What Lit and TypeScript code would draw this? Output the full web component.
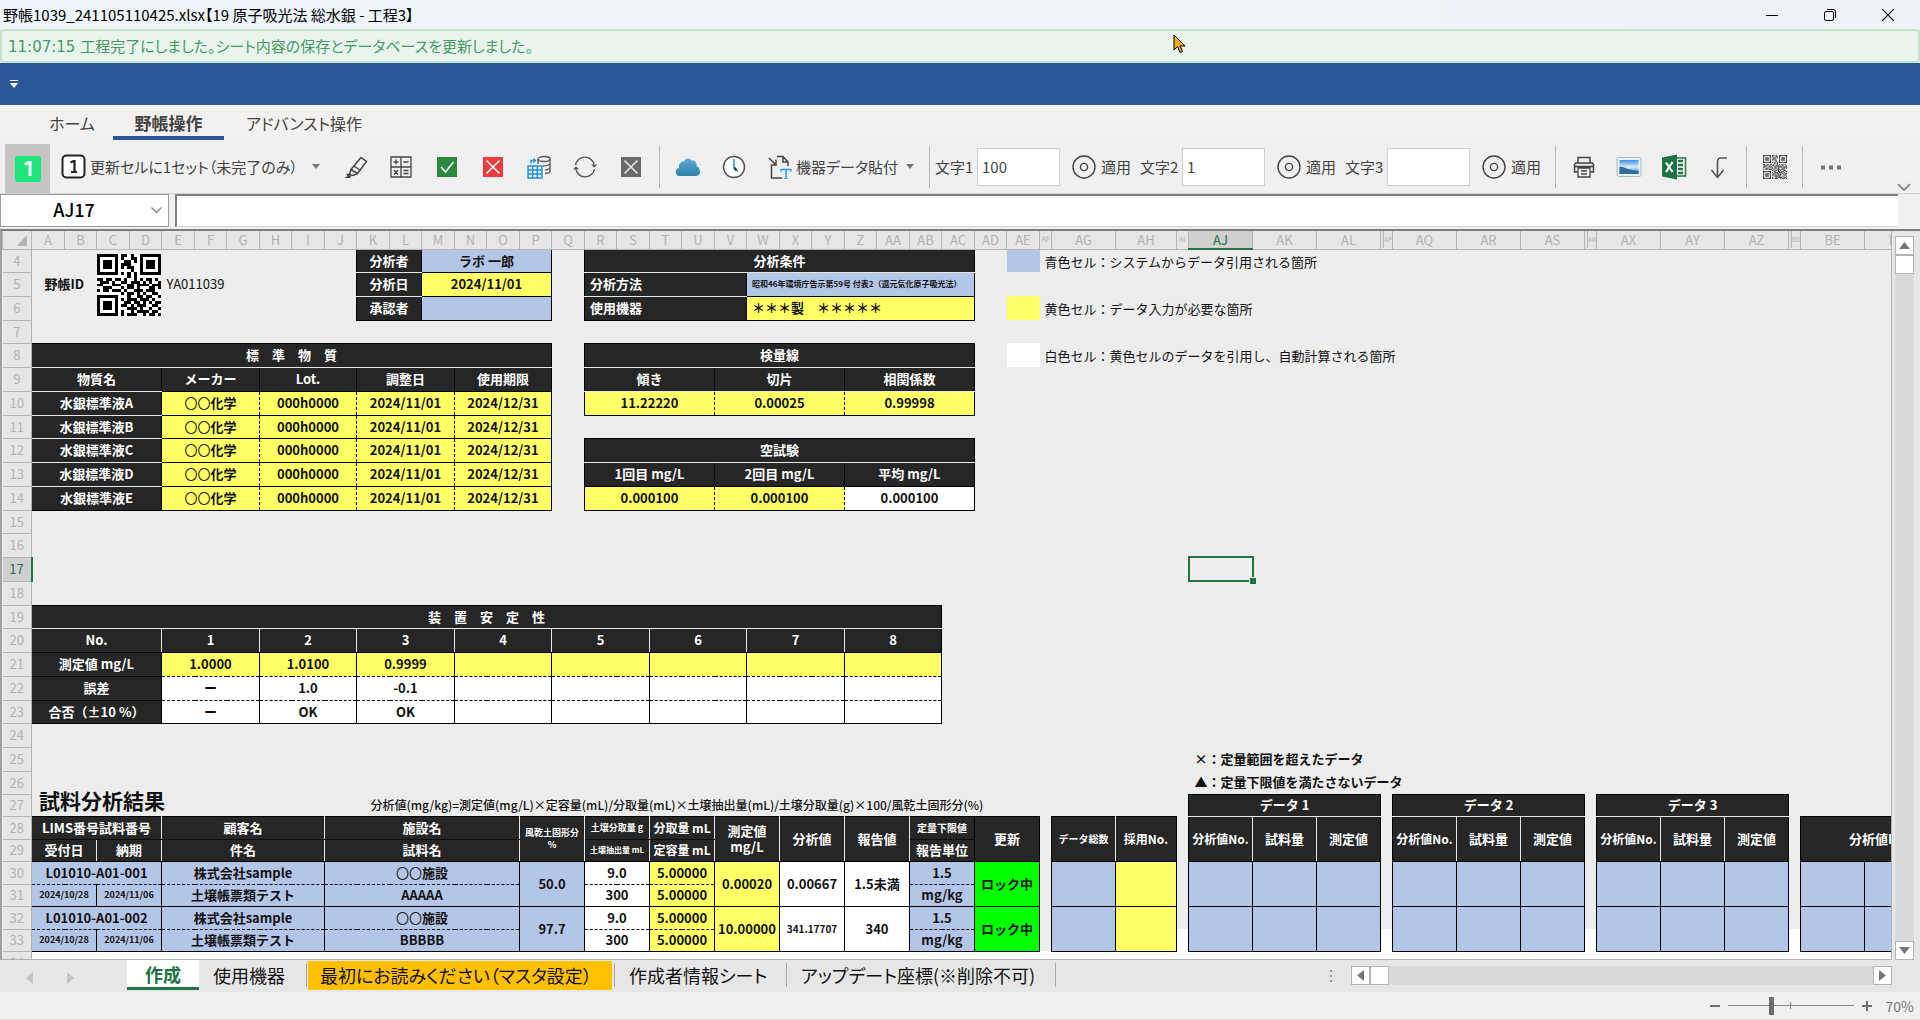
import { LitElement, html, svg, css, nothing, TemplateResult } from "lit";
import { customElement } from "lit/decorators.js";

/* ---------- sheet model ---------- */

interface Column {
  name: string;
  width: number;
  folded?: boolean;
}

interface Cell {
  row: number;
  col: number;
  rows: number;
  cols: number;
  cls: string;
  content: unknown;
}

const LETTERS = "ABCDEFGHIJKLMNOPQRSTUVWXYZ".split("");

const COLUMNS: Column[] = [
  ...[...LETTERS, "AA", "AB", "AC", "AD"].map((name, i) => ({ name, width: i % 2 ? 32 : 33 })),
  { name: "AE", width: 33 },
  { name: "AF", width: 12 },
  { name: "AG", width: 64 },
  { name: "AH", width: 61 },
  { name: "AI", width: 12 },
  { name: "AJ", width: 64 },
  { name: "AK", width: 64 },
  { name: "AL", width: 64 },
  { name: "AP", width: 12, folded: true },
  { name: "AQ", width: 64 },
  { name: "AR", width: 64 },
  { name: "AS", width: 64 },
  { name: "AW", width: 12, folded: true },
  { name: "AX", width: 64 },
  { name: "AY", width: 64 },
  { name: "AZ", width: 64 },
  { name: "BD", width: 12, folded: true },
  { name: "BE", width: 64 },
  { name: "BF", width: 64 },
  { name: "BG", width: 64 },
];

const FIRST_ROW = 4;
const ROW_HEIGHTS = [
  23, 24, 24, 23, 24, 24, 24, 23, 24, 24, 24, 23, 24, 24, 24, 23, 24, 24, 24, 23, 24, 24, 23,
  22, 23, 22, 23, 22, 23, 22, 23,
];
const HEAD_WIDTH = 29;
const TABLE_WIDTH = COLUMNS.reduce((sum, c) => sum + c.width, HEAD_WIDTH);

const colIndex = (name: string) => COLUMNS.findIndex((c) => c.name === name);

function at(range: string, cls = "", content: unknown = ""): Cell {
  const [from, to = from] = range.split(":");
  const [, c1, r1] = /^([A-Z]+)(\d+)$/.exec(from)!;
  const [, c2, r2] = /^([A-Z]+)(\d+)$/.exec(to)!;
  const col = colIndex(c1);
  return {
    row: +r1,
    col,
    rows: +r2 - +r1 + 1,
    cols: colIndex(c2) - col + 1,
    cls,
    content,
  };
}

const QR = [
  "111111101101001111111",
  "100000101001101000001",
  "101110100110101011101",
  "101110101110001011101",
  "101110101011001011101",
  "100000100001001000001",
  "111111101010101111111",
  "000000000010100000000",
  "110110110100101011010",
  "011101001101110101001",
  "110001110011011110111",
  "001110001011010001101",
  "101101110100111011100",
  "000000001011010100110",
  "111111100010011011001",
  "100000101011101110100",
  "101110100110110101011",
  "101110101101011100110",
  "101110100011101001001",
  "100000101001011110110",
  "111111101011100101101",
];

const qrCode = html`<svg class="qr" viewBox="0 0 21 21" preserveAspectRatio="none" role="img" aria-label="YA011039" shape-rendering="crispEdges">
  <rect width="21" height="21" fill="#fff"></rect>
  ${QR.map((line, y) =>
    [...line].map((bit, x) => (bit === "1" ? svg`<rect x=${x} y=${y} width="1" height="1"></rect>` : nothing)),
  )}
</svg>`;

const circles = (rest: string) => html`<span class="thin">〇〇</span>${rest}`;

function buildCells(): Cell[] {
  const cells: Cell[] = [
    at("C4:D6", "pic", qrCode),
    at("A5:B5", "bold", "野帳ID"),
    at("E5:H5", "left", "YA011039"),
    at("K4:L4", "k l rd bw", "分析者"),
    at("M4:P4", "b0 r b", "ラボ 一郎"),
    at("K5:L5", "k l rd bw", "分析日"),
    at("M5:P5", "y r b", "2024/11/01"),
    at("K6:L6", "k l rd b", "承認者"),
    at("M6:P6", "b0 r b"),

    at("R4:AC4", "k l r bw", "分析条件"),
    at("R5:V5", "k l rd bw left", "分析方法"),
    at("W5:AC5", "b0 r b left tiny", "昭和46年環境庁告示第59号 付表2（還元気化原子吸光法）"),
    at("R6:V6", "k l rd b left", "使用機器"),
    at("W6:AC6", "y r b left", "＊＊＊製　＊＊＊＊＊"),

    at("AE4", "b0"),
    at("AF4:AR4", "left note", "青色セル：システムからデータ引用される箇所"),
    at("AE6", "y"),
    at("AF6:AR6", "left note", "黄色セル：データ入力が必要な箇所"),
    at("AE8", "w"),
    at("AF8:AR8", "left note", "白色セル：黄色セルのデータを引用し、自動計算される箇所"),

    at("A8:P8", "k t l r bw", "標　準　物　質"),
    at("A9:D9", "k l rd bw", "物質名"),
    at("E9:G9", "k rd b", "メーカー"),
    at("H9:J9", "k rd b", "Lot."),
    at("K9:M9", "k rd b", "調整日"),
    at("N9:P9", "k r b", "使用期限"),

    at("R8:AC8", "k t l r bw", "検量線"),
    at("R9:U9", "k l rd bw", "傾き"),
    at("V9:Y9", "k rd bw", "切片"),
    at("Z9:AC9", "k r bw", "相関係数"),
    at("R10:U10", "y l rd b", "11.22220"),
    at("V10:Y10", "y rd b", "0.00025"),
    at("Z10:AC10", "y r b", "0.99998"),

    at("R12:AC12", "k t l r bw", "空試験"),
    at("R13:U13", "k l rd b", "1回目 mg/L"),
    at("V13:Y13", "k rd b", "2回目 mg/L"),
    at("Z13:AC13", "k r b", "平均 mg/L"),
    at("R14:U14", "y l rd b", "0.000100"),
    at("V14:Y14", "y rd b", "0.000100"),
    at("Z14:AC14", "w r b", "0.000100"),

    at("AJ17", "sel"),

    at("A19:AB19", "k t l r bw", "装　置　安　定　性"),
    at("A20:D20", "k l rw bd", "No."),
    at("A21:D21", "k l r bd", "測定値 mg/L"),
    at("A22:D22", "k l r bd", "誤差"),
    at("A23:D23", "k l r b", "合否（±10 %）"),

    at("AJ25:AR25", "left bold inset", "×：定量範囲を超えたデータ"),
    at("AJ26:AR26", "left bold inset", "▲：定量下限値を満たさないデータ"),
    at("A26:G27", "left heading", "試料分析結果"),
    at("K27:AE27", "left formula", "分析値(mg/kg)=測定値(mg/L)×定容量(mL)/分取量(mL)×土壌抽出量(mL)/土壌分取量(g)×100/風乾土固形分(%)"),

    at("A28:D28", "k t l rw bd", "LIMS番号試料番号"),
    at("A29:B29", "k l rw b", "受付日"),
    at("C29:D29", "k rw b", "納期"),
    at("E28:I28", "k t rw bd", "顧客名"),
    at("E29:I29", "k rw b", "件名"),
    at("J28:O28", "k t rw bd", "施設名"),
    at("J29:O29", "k rw b", "試料名"),
    at("P28:Q29", "k t rw b small", html`風乾土固形分<br />%`),
    at("R28:S28", "k t rw bd small", "土壌分取量 g"),
    at("R29:S29", "k rw b tiny", "土壌抽出量 mL"),
    at("T28:U28", "k t rw bd mid", "分取量 mL"),
    at("T29:U29", "k rw b mid", "定容量 mL"),
    at("V28:W29", "k t rw b", html`測定値<br />mg/L`),
    at("X28:Y29", "k t rw b", "分析値"),
    at("Z28:AA29", "k t rw b", "報告値"),
    at("AB28:AC28", "k t r bd fit", "定量下限値"),
    at("AB29:AC29", "k r b", "報告単位"),
    at("AD28:AE29", "k t r b", "更新"),
    at("AG28:AG29", "k t l rw b fit", "データ総数"),
    at("AH28:AH29", "k t r b mid", "採用No."),
    at("BE28:BG29", "k t l b peek", "分析値No."),
  ];

  "ABCDE".split("").forEach((id, i) => {
    const r = 10 + i;
    cells.push(
      at(`A${r}:D${r}`, `k l r ${i < 4 ? "bw" : "b"}`, `水銀標準液${id}`),
      at(`E${r}:G${r}`, "y rd b", circles("化学")),
      at(`H${r}:J${r}`, "y rd b", "000h0000"),
      at(`K${r}:M${r}`, "y rd b", "2024/11/01"),
      at(`N${r}:P${r}`, "y r b", "2024/12/31"),
    );
  });

  const stability = [
    ["1.0000", "ー", "ー"],
    ["1.0100", "1.0", "OK"],
    ["0.9999", "-0.1", "OK"],
  ];
  for (let n = 0; n < 8; n++) {
    const from = COLUMNS[4 + n * 3].name;
    const to = COLUMNS[6 + n * 3].name;
    const [value = "", error = "", verdict = ""] = stability[n] ?? [];
    cells.push(
      at(`${from}20:${to}20`, `k b ${n < 7 ? "rw" : "r"}`, String(n + 1)),
      at(`${from}21:${to}21`, "y r bd", value),
      at(`${from}22:${to}22`, "w r bd", error),
      at(`${from}23:${to}23`, "w r b", verdict),
    );
  }

  const samples = [
    { id: "L01010-A01-001", name: "AAAAA", solid: "50.0", measured: "0.00020", analysed: "0.00667", reported: "1.5未満" },
    { id: "L01010-A01-002", name: "BBBBB", solid: "97.7", measured: "10.00000", analysed: "341.17707", reported: "340" },
  ];
  samples.forEach((s, i) => {
    const r = 30 + i * 2;
    const q = r + 1;
    cells.push(
      at(`A${r}:D${r}`, "b0 l r bd", s.id),
      at(`A${q}:B${q}`, "b0 l r b small", "2024/10/28"),
      at(`C${q}:D${q}`, "b0 r b small", "2024/11/06"),
      at(`E${r}:I${r}`, "b0 r bd", "株式会社sample"),
      at(`E${q}:I${q}`, "b0 r b", "土壌帳票類テスト"),
      at(`J${r}:O${r}`, "b0 r bd", circles("施設")),
      at(`J${q}:O${q}`, "b0 r b", s.name),
      at(`P${r}:Q${q}`, "b0 r b", s.solid),
      at(`R${r}:S${r}`, "w r bd", "9.0"),
      at(`R${q}:S${q}`, "w r b", "300"),
      at(`T${r}:U${r}`, "y r bd", "5.00000"),
      at(`T${q}:U${q}`, "y r b", "5.00000"),
      at(`V${r}:W${q}`, "y r b", s.measured),
      at(`X${r}:Y${q}`, s.analysed.length > 8 ? "w r b fit" : "w r b", s.analysed),
      at(`Z${r}:AA${q}`, "w r b", s.reported),
      at(`AB${r}:AC${r}`, "b0 r bd", "1.5"),
      at(`AB${q}:AC${q}`, "b0 r b", "mg/kg"),
      at(`AD${r}:AE${q}`, "g r b", "ロック中"),
      at(`AG${r}:AG${q}`, "b0 l r b"),
      at(`AH${r}:AH${q}`, "y r b"),
      at(`BE${r}:BE${q}`, "b0 l r b"),
      at(`BF${r}:BF${q}`, "b0 r b"),
      at(`BG${r}:BG${q}`, "b0 r b"),
    );
  });

  [
    ["AJ", "AK", "AL"],
    ["AQ", "AR", "AS"],
    ["AX", "AY", "AZ"],
  ].forEach(([a, b, c], i) => {
    cells.push(
      at(`${a}27:${c}27`, "k t l r bw", `データ ${i + 1}`),
      at(`${a}28:${a}29`, "k l rw b mid", "分析値No."),
      at(`${b}28:${b}29`, "k rw b", "試料量"),
      at(`${c}28:${c}29`, "k r b", "測定値"),
    );
    for (const r of [30, 32]) {
      cells.push(
        at(`${a}${r}:${a}${r + 1}`, "b0 l r b"),
        at(`${b}${r}:${b}${r + 1}`, "b0 r b"),
        at(`${c}${r}:${c}${r + 1}`, "b0 r b"),
      );
    }
  });

  for (const gap of ["AI", "AP", "AW", "BD"]) cells.push(at(`${gap}33`, "w"));
  cells.push(at("A34:BG34", "w"));
  return cells;
}

const CELLS = buildCells();

/* ---------- icons ---------- */

const icon = (size: number, body: unknown) =>
  html`<svg class="icon" width=${size} height=${size} viewBox="0 0 ${size} ${size}" fill="none" aria-hidden="true">${body}</svg>`;

const caret = html`<svg width="8" height="5" viewBox="0 0 8 5" aria-hidden="true"><path d="M0 0h8L4 5z" fill="#777"></path></svg>`;

const target = icon(24, svg`<circle cx="12" cy="12" r="11" stroke="#444" stroke-width="1.4"></circle><circle cx="12" cy="12" r="3.6" stroke="#444" stroke-width="1.4"></circle>`);

const ICONS = {
  brush: icon(26, svg`<path d="M9 15.500L19 3.500l5.500 4L15.500 19.500z" stroke="#444" stroke-width="1.500"></path><path d="M12 12l6.500 4.500M9 15.500l-1.500 5 3.500 1 4.500-2" stroke="#444" stroke-width="1.500"></path><path d="M4 20c3-1.500 4 0 3 1.500 2-.5 3 .5 1 2.500H2c3-1 4-2 2-4z" fill="#444"></path>`),
  calc: icon(22, svg`<path d="M1 1h20v20H1zM11 1v20M1 11h20" stroke="#444" stroke-width="1.300"></path><path d="M3.500 6h5M6 3.500v5M13.500 6h5M13.500 14.500h5M13.500 17.500h5M4 14l4 4.500M8 14l-4 4.500" stroke="#444" stroke-width="1.300"></path>`),
  ok: icon(20, svg`<rect width="20" height="20" fill="#2a8a3e"></rect><path d="M4 10l4.500 5L16.500 5" stroke="#fff" stroke-width="1.600"></path>`),
  no: icon(20, svg`<rect width="20" height="20" fill="#ee3a3a"></rect><path d="M3.500 3.500l13 13M16.500 3.500l-13 13" stroke="#fff" stroke-width="1.500"></path>`),
  db: icon(24, svg`<g stroke="#555" stroke-width="1.300"><ellipse cx="17" cy="4" rx="6" ry="2.500"></ellipse><path d="M11 4v5M23 4v12c0 1.500-2 2.300-5 2.500M23 8.500c0 1.500-3 2.400-7 2.300M23 12.500c0 1.300-2 2.200-5 2.300"></path></g><g stroke="#1e90d8" stroke-width="1.400"><path d="M1 11h14v12H1zM1 15h14M1 19h14M5.700 11v12M10.300 11v12M4 8.500V5.500h4M6.500 3.500l2 2-2 2"></path></g>`),
  refresh: icon(24, svg`<path d="M2.500 10A9.500 9.500 0 0 1 21 9M21.500 14A9.500 9.500 0 0 1 3 15" stroke="#555" stroke-width="1.400"></path><path d="M18 9.500h6l-2.700 3.200zM0 14.500h6l-3-3.300z" fill="#555"></path>`),
  off: icon(20, svg`<rect width="20" height="20" fill="#6a6a6a"></rect><path d="M3.500 3.500l13 13M16.500 3.500l-13 13" stroke="#e8e8e8" stroke-width="1.500"></path>`),
  cloud: icon(26, svg`<defs><linearGradient id="sky" x1="0" y1="0" x2="0" y2="1"><stop offset="0" stop-color="#58aadb"></stop><stop offset="1" stop-color="#2f80a8"></stop></linearGradient></defs><path d="M5 22c-5.500 0-5.500-7.500-1-8C3.500 8.500 7 7 9 7.500 10.500 3.500 15 4 16.500 6.500c3.500-.5 5.500 2 5.200 6C26 13 26.500 22 21 22z" fill="url(#sky)"></path>`),
  clock: icon(24, svg`<circle cx="12" cy="12" r="10.500" fill="#fff" stroke="#555" stroke-width="1.500"></circle><path d="M12 4v8l4 4.500" stroke="#2a9be0" stroke-width="1.600"></path><path d="M12 12.500l2.500 3" stroke="#333" stroke-width="2"></path>`),
  paste: icon(24, svg`<path d="M9 1.500h6l5 5.500v4M15 1.500V7h5M3.500 11v12H14" stroke="#444" stroke-width="1.500"></path><path d="M1 3l7 7M8 4.500V10H2.500" stroke="#444" stroke-width="1.500"></path><path d="M13 14.500h10M18 14.500V24M13 14v2.500M23 14v2.500M16 24h4" stroke="#2a9be0" stroke-width="1.500"></path>`),
  print: icon(22, svg`<path d="M5 7V1.500h12V7M5 16H1.500V8.500L3 7h16l1.500 1.500V16H17" stroke="#444" stroke-width="1.500"></path><path d="M5 12h12v9H5zM8 15h6M8 18h6M2 10.500h18" stroke="#444" stroke-width="1.300"></path>`),
  image: icon(26, svg`<defs><linearGradient id="air" x1="0" y1="0" x2="0" y2="1"><stop offset="0" stop-color="#3f8fe0"></stop><stop offset=".5" stop-color="#d8eefa"></stop><stop offset="1" stop-color="#2472c0"></stop></linearGradient></defs><rect x="1" y="3.500" width="24" height="19" rx="1.500" fill="#e9f1f4" stroke="#a9bcc2"></rect><rect x="3.500" y="6" width="19" height="14" fill="url(#air)"></rect><path d="M3.500 13c4-1 6 2 10 2.500S20 17 22.500 17v3h-19z" fill="#2e6f96"></path>`),
  excel: icon(26, svg`<path d="M14 4h10.500v18H14z" fill="#fff" stroke="#1f7244" stroke-width="1.500"></path><path d="M17 7h5M17 11h5M17 15h5M17 19h5" stroke="#1f7244" stroke-width="2.500"></path><path d="M1 3.500L16 .5v25L1 22.500z" fill="#1f7244"></path><path d="M5 8.500l6.500 9.500M11.500 8L5 18" stroke="#fff" stroke-width="2.200"></path>`),
  turn: icon(24, svg`<path d="M20 3H14q-3.500 0-3.500 4v15M4.500 15l6 7.500 6-7.500" stroke="#555" stroke-width="1.600"></path>`),
  dots: icon(22, svg`<path d="M1 9.500h4v4H1zM9 9.500h4v4H9zM17 9.500h4v4h-4z" fill="#777"></path>`),
  qr: html`<svg class="icon" width="24" height="24" viewBox="0 0 21 21" aria-hidden="true">
    ${QR.map((line, y) => [...line].map((bit, x) => (bit === "1" ? svg`<rect x=${x} y=${y} width="1" height="1" fill="#333"></rect>` : nothing)))}
  </svg>`,
};

/* ---------- elements ---------- */

@customElement("sheet-grid")
class SheetGrid extends LitElement {
  static styles = css`
    :host {
      display: block;
      overflow: hidden;
      background: #fff;
    }
    .sheet {
      border-collapse: collapse;
      table-layout: fixed;
      background: #ededed;
      font-size: 13px;
      line-height: 16px;
      color: #111;
    }
    th,
    td {
      padding: 0;
      font-weight: 700;
      text-align: center;
      vertical-align: middle;
      white-space: nowrap;
    }
    .colhead,
    .rowhead {
      background: #e6e6e6;
      color: #b2b2b2;
      font-weight: 400;
      border: 1px solid #b4b4b4;
      border-top: 0;
    }
    .rowhead {
      border-left: 0;
    }
    .colname {
      height: 17px;
      line-height: 17px;
    }
    .narrow {
      font-size: 7px;
    }
    .folded {
      border-left: 1px solid #b4b4b4;
      margin-left: 2px;
      font-size: 6px;
    }
    .active {
      background: #d0d0d0;
      color: #217346;
    }
    .colhead.active {
      border-bottom: 2px solid #217346;
    }
    .rowhead.active {
      border-right: 2px solid #217346;
    }
    .corner svg {
      display: block;
      margin: 2px 4px 0 auto;
    }
    .blank,
    .left {
      font-weight: 400;
    }
    .k {
      background: #262626;
      color: #fff;
      font-weight: 700;
    }
    .y {
      background: #ffff66;
      font-weight: 700;
    }
    .b0 {
      background: #b4c6e7;
      font-weight: 700;
    }
    .w {
      background: #fff;
    }
    .g {
      background: #0f0;
    }
    .t {
      border-top: 1px solid #000;
    }
    .l {
      border-left: 1px solid #000;
    }
    .r {
      border-right: 1px solid #000;
    }
    .b {
      border-bottom: 1px solid #000;
    }
    .rd {
      border-right: 1px dashed #000;
    }
    .bd {
      border-bottom: 1px dashed #000;
    }
    .k.rd {
      border-right: 1px solid #0c0c0c;
    }
    .k.bd {
      border-bottom: 1px solid #0c0c0c;
    }
    .rw {
      border-right: 1px solid #e8e8e8;
    }
    .bw {
      border-bottom: 1px solid #e8e8e8;
    }
    .left {
      text-align: left;
      padding-left: 5px;
    }
    .note {
      padding-top: 2px;
    }
    .inset {
      padding-left: 6px;
    }
    .bold {
      font-weight: 700;
    }
    .thin {
      font-weight: 400;
    }
    .mid {
      font-size: 12px;
    }
    .fit {
      font-size: 10px;
    }
    .small {
      font-size: 9px;
      line-height: 12px;
    }
    .tiny {
      font-size: 8px;
      line-height: 12px;
    }
    .heading {
      padding: 0 0 2px 7px;
      font-size: 21px;
      line-height: 28px;
      font-weight: 700;
      vertical-align: bottom;
    }
    .formula {
      padding-left: 14px;
      font-size: 12px;
      font-weight: 500;
    }
    .peek {
      text-align: left;
      padding-left: 48px;
    }
    .qr {
      display: block;
      width: 64px;
      height: 62px;
      margin: 0 auto;
    }
    .sel {
      position: relative;
      outline: 2px solid #217346;
      outline-offset: -1px;
    }
    .sel::after {
      content: "";
      position: absolute;
      right: -3px;
      bottom: -3px;
      width: 6px;
      height: 6px;
      background: #217346;
      border: 1px solid #ededed;
      border-right: 0;
      border-bottom: 0;
    }
  `;

  private cell(c: Cell): TemplateResult {
    return c.cls.startsWith("k ")
      ? html`<th class=${c.cls} colspan=${c.cols} rowspan=${c.rows}>${c.content}</th>`
      : html`<td class=${c.cls} colspan=${c.cols} rowspan=${c.rows}>${c.content}</td>`;
  }

  private row(row: number): TemplateResult[] {
    const out: TemplateResult[] = [];
    let gap = 0;
    const flush = () => {
      if (gap) out.push(html`<td class="blank" colspan=${gap}></td>`);
      gap = 0;
    };
    for (let col = 0; col < COLUMNS.length; col++) {
      const hit = CELLS.find((c) => row >= c.row && row < c.row + c.rows && col >= c.col && col < c.col + c.cols);
      if (!hit) {
        gap++;
        continue;
      }
      flush();
      if (hit.row === row) out.push(this.cell(hit));
      col = hit.col + hit.cols - 1;
    }
    flush();
    return out;
  }

  render() {
    return html`
      <table class="sheet" style="width:${TABLE_WIDTH}px">
        <colgroup>
          <col style="width:${HEAD_WIDTH}px" />
          ${COLUMNS.map((c) => html`<col style="width:${c.width}px" />`)}
        </colgroup>
        <thead>
          <tr>
            <th class="colhead corner">
              <svg width="10" height="11" viewBox="0 0 10 11" aria-hidden="true"><path d="M10 0v11H0z" fill="#b2b2b2"></path></svg>
            </th>
            ${COLUMNS.map(
              (c) => html`<th scope="col" class="colhead ${c.name === "AJ" ? "active" : ""}">
                <div class="colname ${c.width < 20 ? "narrow" : ""} ${c.folded ? "folded" : ""}">${c.name}</div>
              </th>`,
            )}
          </tr>
        </thead>
        <tbody>
          ${ROW_HEIGHTS.map((h, i) => {
            const row = FIRST_ROW + i;
            return html`<tr style="height:${h}px">
              <th scope="row" class="rowhead ${row === 17 ? "active" : ""}">${row}</th>
              ${this.row(row)}
            </tr>`;
          })}
        </tbody>
      </table>
    `;
  }
}

@customElement("app-root")
class AppRoot extends LitElement {
  static styles = css`
    * {
      box-sizing: border-box;
    }
    :host {
      position: relative;
      display: flex;
      flex-direction: column;
      height: 100vh;
      overflow: hidden;
      background: #f0f0f0;
      color: #444;
      font-family: "Noto Sans CJK JP", "Liberation Sans", sans-serif;
      font-size: 15px;
      line-height: 20px;
    }
    button,
    input {
      font: inherit;
      color: inherit;
      border: 0;
      padding: 0;
      margin: 0;
      background: none;
      border-radius: 0;
    }
    button {
      white-space: nowrap;
    }
    .prop,
    .prop button {
      font-feature-settings: "palt";
    }
    .titlebar {
      display: flex;
      align-items: center;
      height: 29px;
      flex: none;
      padding-left: 3px;
      background: linear-gradient(90deg, #eef4f9, #eff4f9 75%, #eef3fc 90%, #eff3f9);
      color: #000;
    }
    .title {
      flex: 1;
      margin: 0;
      font-size: 15px;
      font-weight: 400;
    }
    .winbtn {
      width: 58px;
      height: 29px;
      display: grid;
      place-items: center;
    }
    .winend {
      width: 3px;
    }
    .notice {
      flex: none;
      height: 34px;
      padding: 0 6px;
      border: 2px solid #c3e3cd;
      border-radius: 4px;
      background: #e9f4ec;
      color: #459b63;
      font-family: "DejaVu Sans", "Noto Sans CJK JP", sans-serif;
      font-size: 15px;
      line-height: 32px;
      white-space: nowrap;
    }
    .quick {
      flex: none;
      height: 42px;
      display: flex;
      align-items: center;
      padding-left: 10px;
      background: #2b579a;
    }
    .quick button {
      display: flex;
    }
    .tabs {
      flex: none;
      display: flex;
      height: 35px;
      padding-left: 33px;
      background: #f3f1ef;
    }
    .tab {
      height: 35px;
      padding: 4px 16px 0;
      font-size: 16px;
      border-bottom: 4px solid transparent;
    }
    .tab.first {
      width: 80px;
      text-align: left;
    }
    .tab.on {
      width: 111px;
      margin-right: 6px;
      padding: 4px 0 0;
      font-size: 17px;
      font-weight: 700;
      border-bottom-color: #2b579a;
    }
    .toolbar {
      flex: none;
      display: flex;
      align-items: center;
      height: 54px;
      padding: 0 5px;
      border-bottom: 1px solid #d4d4d4;
    }
    .one {
      align-self: stretch;
      width: 45px;
      margin: 4px 0 0;
      display: grid;
      place-items: center;
      background: #c6c4c2;
    }
    .tool {
      width: 46px;
      height: 46px;
      display: grid;
      place-items: center;
      flex: none;
    }
    .tool.tight {
      width: 45px;
    }
    .wide {
      display: flex;
      align-items: center;
      gap: 4px;
      padding-left: 11px;
      height: 46px;
    }
    .fill {
      width: 250px;
    }
    .gear {
      width: 139px;
    }
    .drop {
      width: 32px;
      height: 46px;
      display: grid;
      place-items: center;
    }
    .drop.end {
      width: 28px;
    }
    .sep {
      flex: none;
      width: 1px;
      height: 42px;
      margin: 0 5px;
      background: #b8b8b8;
    }
    .field {
      width: 83px;
      height: 38px;
      flex: none;
      margin-left: 5px;
      padding: 0 4px;
      background: #fff;
      border: 1px solid #d0d0d0;
    }
    .apply {
      display: flex;
      align-items: center;
      gap: 5px;
      width: 80px;
      flex: none;
      padding-left: 12px;
    }
    .textlabel {
      width: 37px;
      flex: none;
      white-space: nowrap;
    }
    .spacer {
      flex: 1;
    }
    .more {
      align-self: flex-end;
      width: 22px;
      height: 18px;
    }
    .icon {
      display: block;
      flex: none;
    }
    .fxbar {
      flex: none;
      display: flex;
      gap: 6px;
      height: 35px;
      padding-right: 22px;
      background: #f0f0f0;
    }
    .namebox {
      display: flex;
      width: 169px;
      height: 33px;
      border: 1px solid #9a9a9a;
      background: #fff;
      flex: none;
    }
    .nameinput {
      width: 134px;
      height: 31px;
      padding: 0 0 3px 12px;
      text-align: center;
      font-size: 18px;
      font-weight: 500;
      color: #000;
    }
    .namedrop {
      flex: 1;
      padding-left: 10px;
      display: grid;
      place-items: center;
    }
    .fx {
      flex: 1;
      min-width: 0;
      height: 33px;
      padding: 0 8px;
      background: #fff;
      border: 2px solid #808080;
      border-right: 0;
      border-bottom: 1px solid #d8d8d8;
    }
    .body {
      flex: 1;
      min-height: 0;
      display: flex;
      border-top: 2px solid #7c7c7c;
      border-left: 2px solid #a0a0a0;
      background: #e6e6e6;
    }
    .grid {
      flex: 1;
      min-width: 0;
      border-right: 1px solid #b0b0b0;
      border-bottom: 1px solid #b0b0b0;
    }
    .vscroll {
      width: 19px;
      flex: none;
      margin: 5px 6px 0 3px;
      display: flex;
      flex-direction: column;
      background: #dadada;
    }
    .knob {
      width: 19px;
      height: 19px;
      display: grid;
      place-items: center;
      background: #fff;
      border: 1px solid #b4b4b4;
      flex: none;
    }
    .sheets {
      flex: none;
      display: flex;
      height: 32px;
      padding-right: 28px;
      background: #e6e6e6;
      color: #111;
      font-size: 18px;
    }
    .nav {
      width: 127px;
      flex: none;
      display: flex;
      gap: 34px;
      padding-left: 26px;
      align-items: center;
    }
    .sheettab {
      height: 30px;
      padding: 0 0 0 14px;
      line-height: 28px;
      text-align: left;
    }
    .sheettab.current {
      width: 72px;
      padding: 0;
      text-align: center;
      background: #fff;
      color: #217346;
      font-weight: 700;
      border-bottom: 3px solid #217346;
    }
    .sheettab.usage {
      width: 107px;
    }
    .sheettab.master {
      width: 304px;
      height: 29px;
      margin: 1px 2px 0 1px;
      padding-left: 12px;
      line-height: 27px;
      background: #ffc000;
    }
    .sheettab.author {
      width: 171px;
    }
    .sheettab.update {
      width: 268px;
    }
    .bar {
      width: 1px;
      height: 24px;
      margin-top: 3px;
      background: #a8a8a8;
      flex: none;
    }
    .grip {
      align-self: center;
      margin-right: 18px;
    }
    .hscroll {
      width: 541px;
      height: 19px;
      margin-top: 6px;
      flex: none;
      display: flex;
      background: #dadada;
    }
    .status {
      flex: none;
      display: flex;
      align-items: center;
      justify-content: flex-end;
      gap: 7px;
      height: 28px;
      padding: 0 6px 0 0;
      border-bottom: 1px solid #e4e4e4;
      font-size: 14px;
      color: #777;
    }
    .zoom {
      appearance: none;
      width: 126px;
      height: 18px;
      background:
        linear-gradient(#888, #888) 62px 50% / 1px 7px no-repeat,
        linear-gradient(#888, #888) 0 50% / 100% 1px no-repeat;
    }
    .zoom::-webkit-slider-thumb {
      appearance: none;
      width: 5px;
      height: 18px;
      background: #6e6e6e;
    }
    .step {
      width: 12px;
      height: 12px;
      display: grid;
      place-items: center;
    }
    .percent {
      margin-left: 6px;
    }
    .cursor {
      position: absolute;
      left: 1173px;
      top: 34px;
    }
  `;

  private textTool(n: number, value: string) {
    return html`
      <label class="textlabel prop" for="text${n}">文字${n}</label>
      <input class="field" id="text${n}" type="text" .value=${value} />
      <button class="apply" type="button">${target}<span>適用</span></button>
    `;
  }

  private tool(name: string, art: unknown, cls = "") {
    return html`<button class="tool ${cls}" type="button" aria-label=${name}>${art}</button>`;
  }

  render() {
    return html`
      <header class="titlebar">
        <h1 class="title prop">野帳1039_241105110425.xlsx【19 原子吸光法 総水銀 - 工程3】</h1>
        <button class="winbtn" type="button" aria-label="最小化">
          <svg width="12" height="12" viewBox="0 0 12 12" stroke="#000"><path d="M0 6.500h12"></path></svg>
        </button>
        <button class="winbtn" type="button" aria-label="元に戻す">
          <svg width="12" height="12" viewBox="0 0 12 12" fill="none" stroke="#000"><rect x=".5" y="2.500" width="9" height="9" rx="1.500"></rect><path d="M3 .5h6a2.500 2.500 0 0 1 2.500 2.500v6"></path></svg>
        </button>
        <button class="winbtn" type="button" aria-label="閉じる">
          <svg width="12" height="12" viewBox="0 0 12 12" stroke="#000" stroke-width="1.200"><path d="M0 0l12 12M12 0L0 12"></path></svg>
        </button>
        <span class="winend"></span>
      </header>
      <div class="notice prop" role="status">11:07:15 工程完了にしました。シート内容の保存とデータベースを更新しました。</div>
      <div class="quick">
        <button type="button" aria-label="クイック アクセスのカスタマイズ">
          <svg width="8" height="8" viewBox="0 0 8 8" fill="#fff"><path d="M0 0h8v1H0zM0 3h8L4 8z"></path></svg>
        </button>
      </div>
      <nav class="tabs prop">
        <button class="tab first" type="button">ホーム</button>
        <button class="tab on" type="button">野帳操作</button>
        <button class="tab" type="button">アドバンスト操作</button>
      </nav>
      <div class="toolbar" role="toolbar">
        <button class="one" type="button" aria-label="1">
          ${icon(26, svg`<rect width="26" height="26" rx="3" fill="#1fe67b"></rect><path d="M10 8.500l3-2h2V20" stroke="#fff" stroke-width="3"></path>`)}
        </button>
        <button class="wide fill prop" type="button">
          ${icon(25, svg`<rect x="1.500" y="1.500" width="22" height="22" rx="4" fill="#fff" stroke="#222" stroke-width="2"></rect><path d="M9.500 8.500l3-1.500h1v11.500M10 18h6" stroke="#222" stroke-width="2.200"></path>`)}
          <span>更新セルに1セット（未完了のみ）</span>
        </button>
        <button class="drop" type="button" aria-label="セットの選択">${caret}</button>
        ${this.tool("ハイライト", ICONS.brush)} ${this.tool("計算", ICONS.calc)} ${this.tool("完了", ICONS.ok)}
        ${this.tool("未完了", ICONS.no)} ${this.tool("データ取込", ICONS.db)} ${this.tool("更新", ICONS.refresh)}
        ${this.tool("解除", ICONS.off)}
        <span class="sep"></span>
        ${this.tool("クラウド", ICONS.cloud)} ${this.tool("履歴", ICONS.clock)}
        <button class="wide gear prop" type="button">${ICONS.paste}<span>機器データ貼付</span></button>
        <button class="drop end" type="button" aria-label="貼付の選択">${caret}</button>
        <span class="sep"></span>
        ${this.textTool(1, "100")} ${this.textTool(2, "1")} ${this.textTool(3, "")}
        <span class="sep"></span>
        ${this.tool("印刷", ICONS.print, "tight")} ${this.tool("画像", ICONS.image, "tight")}
        ${this.tool("Excel", ICONS.excel, "tight")} ${this.tool("改行", ICONS.turn, "tight")}
        <span class="sep"></span>
        ${this.tool("QRコード", ICONS.qr, "tight")}
        <span class="sep"></span>
        ${this.tool("その他", ICONS.dots, "tight")}
        <span class="spacer"></span>
        <button class="more" type="button" aria-label="リボンを折りたたむ">
          <svg width="14" height="8" viewBox="0 0 14 8" fill="none" stroke="#777" stroke-width="1.600"><path d="M1 1l6 6 6-6"></path></svg>
        </button>
      </div>
      <div class="fxbar">
        <div class="namebox">
          <input class="nameinput" type="text" aria-label="名前ボックス" .value=${"AJ17"} />
          <button class="namedrop" type="button" aria-label="名前の一覧">
            <svg width="11" height="7" viewBox="0 0 11 7" fill="none" stroke="#888" stroke-width="1.400"><path d="M.5 .5l5 5 5-5"></path></svg>
          </button>
        </div>
        <input class="fx" type="text" aria-label="数式バー" />
      </div>
      <main class="body">
        <sheet-grid class="grid"></sheet-grid>
        <div class="vscroll">
          <button class="knob" type="button" aria-label="上へ"><svg width="11" height="7" viewBox="0 0 11 7"><path d="M0 7h11L5.500 0z" fill="#777"></path></svg></button>
          <div class="knob"></div>
          <span class="spacer"></span>
          <button class="knob" type="button" aria-label="下へ"><svg width="11" height="7" viewBox="0 0 11 7"><path d="M0 0h11L5.500 7z" fill="#777"></path></svg></button>
        </div>
      </main>
      <div class="sheets prop">
        <div class="nav">
          <button type="button" aria-label="前のシート"><svg width="7" height="12" viewBox="0 0 7 12"><path d="M7 0v12L0 6z" fill="#c4c4c4"></path></svg></button>
          <button type="button" aria-label="次のシート"><svg width="7" height="12" viewBox="0 0 7 12"><path d="M0 0v12l7-6z" fill="#c4c4c4"></path></svg></button>
        </div>
        <button class="sheettab current" type="button">作成</button>
        <button class="sheettab usage" type="button">使用機器</button>
        <span class="bar"></span>
        <button class="sheettab master" type="button">最初にお読みください（マスタ設定）</button>
        <span class="bar"></span>
        <button class="sheettab author" type="button">作成者情報シート</button>
        <span class="bar"></span>
        <button class="sheettab update" type="button">アップデート座標(※削除不可)</button>
        <span class="bar"></span>
        <span class="spacer"></span>
        <svg class="grip" width="3" height="13" viewBox="0 0 3 13" fill="#999"><path d="M0 0h2v2H0zM0 5h2v2H0zM0 10h2v2H0z"></path></svg>
        <div class="hscroll">
          <button class="knob" type="button" aria-label="左へ"><svg width="7" height="11" viewBox="0 0 7 11"><path d="M7 0v11L0 5.500z" fill="#777"></path></svg></button>
          <div class="knob"></div>
          <span class="spacer"></span>
          <button class="knob" type="button" aria-label="右へ"><svg width="7" height="11" viewBox="0 0 7 11"><path d="M0 0v11l7-5.500z" fill="#777"></path></svg></button>
        </div>
      </div>
      <footer class="status">
        <button class="step" type="button" aria-label="縮小"><svg width="10" height="10" viewBox="0 0 10 10"><path d="M0 4h10v2H0z" fill="#6e6e6e"></path></svg></button>
        <input class="zoom" type="range" min="0" max="200" value="68" aria-label="ズーム" />
        <button class="step" type="button" aria-label="拡大"><svg width="10" height="10" viewBox="0 0 10 10"><path d="M0 4h10v2H0zM4 0h2v10H4z" fill="#6e6e6e"></path></svg></button>
        <output class="percent">70%</output>
      </footer>
      <svg class="cursor" width="13" height="20" viewBox="0 0 13 20" aria-hidden="true">
        <path d="M1 1v15l3.500-3.500 2.500 6 2.500-1-2.500-5.500H12z" fill="#f7a81b" stroke="#000"></path>
      </svg>
    `;
  }
}
